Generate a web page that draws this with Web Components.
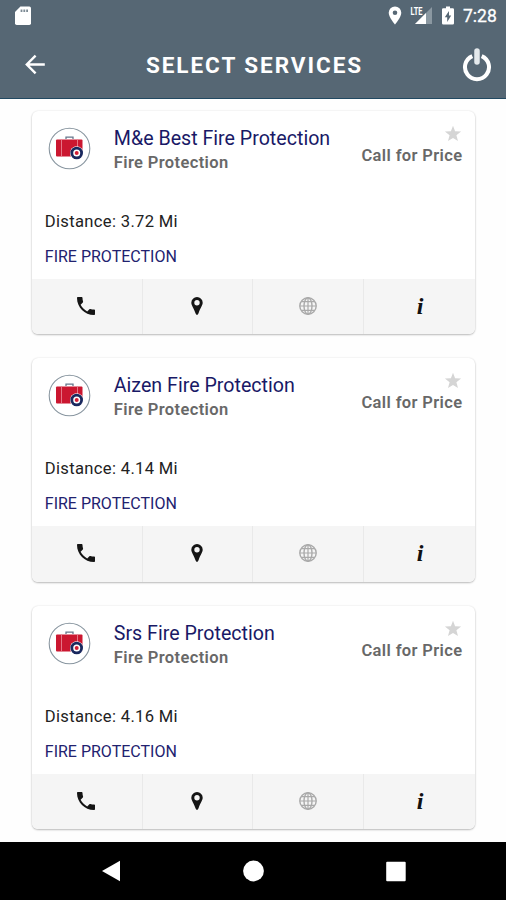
<!DOCTYPE html>
<html lang="en">
<head>
<meta charset="utf-8">
<title>Select Services</title>
<style>
html,body{margin:0;height:100%;overflow:hidden;background:#fff;font-family:Roboto,"Liberation Sans",sans-serif}
</style>
</head>
<body>
<services-screen></services-screen>
<script>
function define(name, html) {
  const t = document.createElement('template');
  t.innerHTML = html;
  customElements.define(name, class extends HTMLElement {
    constructor() {
      super();
      this.attachShadow({mode: 'open'}).appendChild(t.content.cloneNode(true));
    }
  });
}

define('status-bar', `
<style>
:host{display:flex;height:32px;box-sizing:border-box;padding:0 9px 0 14px;align-items:center;color:#fff}
svg{display:block;flex:none}
.gap{flex:1}
.pin{margin-right:8px}.lte{margin-right:9px}.bat{margin-right:9px}
.time{font-size:17.500px;line-height:32px;width:34px;white-space:nowrap;-webkit-text-stroke:.3px #fff}
</style>
<svg width="18" height="20" viewBox="0 0 18 20"><path fill="#fff" d="M6.400 .5H15.300Q17 .5 17 2.200V17.300Q17 19 15.300 19H2.700Q1 19 1 17.300V5.900Z"/><path stroke="#7d8b95" stroke-width="1.800" d="M7.500 3.500v2.600M10.300 3.500v2.600M13.100 3.500v2.600"/></svg>
<span class="gap"></span>
<svg class="pin" width="14" height="20" viewBox="0 0 14 20"><path fill="#fff" fill-rule="evenodd" d="M7 .5a6.300 6.300 0 0 0-6.300 6.300C.7 11.500 7 18.500 7 18.500s6.300-7 6.300-11.700A6.300 6.300 0 0 0 7 .5Zm0 4a2.300 2.300 0 1 1 0 4.600A2.300 2.300 0 0 1 7 4.500Z"/></svg>
<svg class="lte" width="23" height="20" viewBox="0 0 23 20"><path fill="#8b98a1" d="M22 1V18H5Z"/><path fill="#566774" d="M0 0h13v10H0z"/><path fill="#fff" d="M16 7V18H5Z"/><text x=".5" y="8.500" font-size="10.500" font-weight="700" textLength="12" lengthAdjust="spacingAndGlyphs" fill="#fff">LTE</text></svg>
<svg class="bat" width="12" height="20" viewBox="0 0 12 20"><path fill="#fff" d="M4 .5h4v1.800h2.700q1.300 0 1.300 1.300v13.600q0 1.300-1.300 1.300H1.300Q0 18.500 0 17.200V3.600q0-1.300 1.300-1.300H4Z"/><path fill="#566774" d="M7 5 2.800 11.300h2.400V16l4-6.500H7Z"/></svg>
<span class="time">7:28</span>`);

define('app-bar', `
<style>
:host{display:grid;grid-template-columns:70px 1fr 70px;height:67px;align-items:center;box-sizing:border-box;color:#fff;border-bottom:1.500px solid #214962;padding-bottom:1px}
svg{display:block}
.back{margin-left:24px}
h1{margin:0;text-align:center;font-size:22.500px;font-weight:700;letter-spacing:1.950px;line-height:30px;white-space:nowrap;padding-left:3px}
.power{justify-self:end;margin-right:14px}
</style>
<svg class="back" width="22" height="22" viewBox="0 0 22 22"><path fill="none" stroke="#fff" stroke-width="2.400" d="M20.800 10.500H3M11.600 1.700 2.800 10.500l8.800 8.800"/></svg>
<h1><slot></slot></h1>
<svg class="power" width="30" height="36" viewBox="0 0 30 36"><path fill="none" stroke="#fff" stroke-width="4" d="M10.300 9.100a12 12 0 1 0 9.400 0"/><path stroke="#e4e9ec" stroke-width="5.500" stroke-linecap="round" d="M15 4v11"/></svg>`);

define('action-cell', `
<style>
:host{display:flex;align-items:center;justify-content:center;flex:1;box-sizing:border-box;border-right:1px solid #e9e9e9;color:#111;padding-bottom:1px}
:host(:last-child){border-right-color:transparent}
</style>
<slot></slot>`);

define('service-card', `
<style>
:host{display:flex;flex-direction:column;height:223.500px;box-sizing:border-box;border-radius:6px;overflow:hidden;background:#fff;box-shadow:0 1px 2px rgba(0,0,0,.25),0 0 2px rgba(0,0,0,.09)}
.body{flex:1;padding:0 13px}
.head{display:grid;grid-template-columns:69px 1fr auto;height:101px;box-sizing:border-box;padding-top:16px}
svg{display:block}
.logo{margin-left:3px;margin-top:.3px}
.name{font-size:19.640px;line-height:22px;padding-top:1px;color:#191966;white-space:nowrap}
.kind{font-size:16.500px;line-height:20px;margin-top:3px;font-weight:600;color:#686868;white-space:nowrap;letter-spacing:.370px}
.side{display:flex;flex-direction:column;align-items:flex-end;margin-left:-60px}
.star{margin-top:-2px}
.price{font-size:16.500px;line-height:20px;margin-top:3px;font-weight:600;color:#686868;white-space:nowrap;letter-spacing:.370px;margin-right:-.5px}
.dist{font-size:16.600px;line-height:20px;color:#222;letter-spacing:.320px}
.cat{font-size:16px;line-height:20px;color:#22226f;margin-top:15px}
.foot{display:flex;height:55.500px;background:#f5f5f5}
.phone{margin-right:1px}
.i{font:italic 700 24px/24px "Liberation Serif",serif;padding-left:2px}
</style>
<div class="body">
 <div class="head">
  <svg class="logo" width="43" height="43" viewBox="0 0 43 43"><circle cx="21.500" cy="21.500" r="20.300" fill="#fff" stroke="#8996a0" stroke-width="1.100"/><path fill="none" stroke="#65778c" stroke-width="1.300" d="M18 12v-1.800h7V12"/><rect x="8" y="12.500" width="26.500" height="17" rx="1" fill="#cb1730"/><path stroke="#e88190" stroke-width=".9" d="M13.500 12.500v17M29.500 12.500v17"/><circle cx="28.700" cy="26" r="6.700" fill="#fff"/><circle cx="28.700" cy="26" r="4.900" fill="#fff" stroke="#19285e" stroke-width="2.800"/><circle cx="28.700" cy="26" r="2" fill="#d21d35"/></svg>
  <div><div class="name"><slot name="name"></slot></div><div class="kind">Fire Protection</div></div>
  <div class="side"><svg class="star" width="18" height="18" viewBox="0 0 18 18"><path fill="#d5d5d5" d="m9 .8 2.100 5.500 6 .3-4.700 3.700 1.600 5.800L9 12.900l-5 3.200 1.600-5.800L.9 6.600l6-.3Z"/></svg><div class="price">Call for Price</div></div>
 </div>
 <div class="dist">Distance: <slot name="distance"></slot> Mi</div>
 <div class="cat">FIRE PROTECTION</div>
</div>
<div class="foot">
 <action-cell><svg class="phone" width="24" height="24" viewBox="0 0 24 24"><path fill="#151515" d="M6.620 10.790c1.440 2.830 3.760 5.140 6.590 6.590l2.200-2.200c.27-.27.67-.36 1.020-.24 1.120.37 2.330.57 3.570.57.55 0 1 .45 1 1V20c0 .55-.45 1-1 1-9.390 0-17-7.610-17-17 0-.55.45-1 1-1h3.500c.55 0 1 .45 1 1 0 1.250.2 2.450.57 3.570.11.35.03.74-.25 1.020Z"/></svg></action-cell>
 <action-cell><svg width="12" height="20" viewBox="0 0 12 20"><path fill="#151515" fill-rule="evenodd" d="M6 1a5.700 5.700 0 0 0-5.700 5.700c0 2.800 2.500 5.100 3.900 9.900Q4.800 19 6 19t1.800-2.400c1.400-4.800 3.900-7.100 3.900-9.900A5.700 5.700 0 0 0 6 1Zm0 3a2.700 2.700 0 1 1 0 5.400A2.700 2.700 0 0 1 6 4Z"/></svg></action-cell>
 <action-cell><svg width="20" height="20" viewBox="0 0 20 20"><g fill="none" stroke="#aaa" stroke-width="1.400"><circle cx="10" cy="10" r="8.200"/><ellipse cx="10" cy="10" rx="4" ry="8.200"/><path d="M1.800 10h16.400M3.200 5.700h13.600M3.200 14.300h13.600M10 1.800v16.400" stroke-width="1.200"/></g></svg></action-cell>
 <action-cell><span class="i">i</span></action-cell>
</div>`);

define('nav-bar', `
<style>
:host{display:flex;justify-content:space-between;align-items:center;height:58.500px;background:#000;box-sizing:border-box;padding:0 99px 0 101px}
svg{display:block}
</style>
<svg width="22" height="22" viewBox="0 0 22 22"><path fill="#fff" d="M19 .8V21.200L1 11Z"/></svg>
<svg width="22" height="22" viewBox="0 0 22 22"><circle cx="10.500" cy="11" r="10.400" fill="#fff"/></svg>
<svg width="22" height="22" viewBox="0 0 22 22"><rect x="1.200" y="1.700" width="19.500" height="19.500" rx="1" fill="#fff"/></svg>`);

define('services-screen', `
<style>
:host{display:flex;flex-direction:column;height:900px;background:#fefefe}
header{background:#566774}
main{flex:1;min-height:0;display:flex;flex-direction:column;gap:24px;padding:11.600px 31px 0 31.800px}
</style>
<header><status-bar></status-bar><app-bar>SELECT SERVICES</app-bar></header>
<main>
<service-card><span slot="name">M&amp;e Best Fire Protection</span><span slot="distance">3.72</span></service-card>
<service-card><span slot="name">Aizen Fire Protection</span><span slot="distance">4.14</span></service-card>
<service-card><span slot="name">Srs Fire Protection</span><span slot="distance">4.16</span></service-card>
</main>
<nav-bar></nav-bar>`);
</script>
</body>
</html>
